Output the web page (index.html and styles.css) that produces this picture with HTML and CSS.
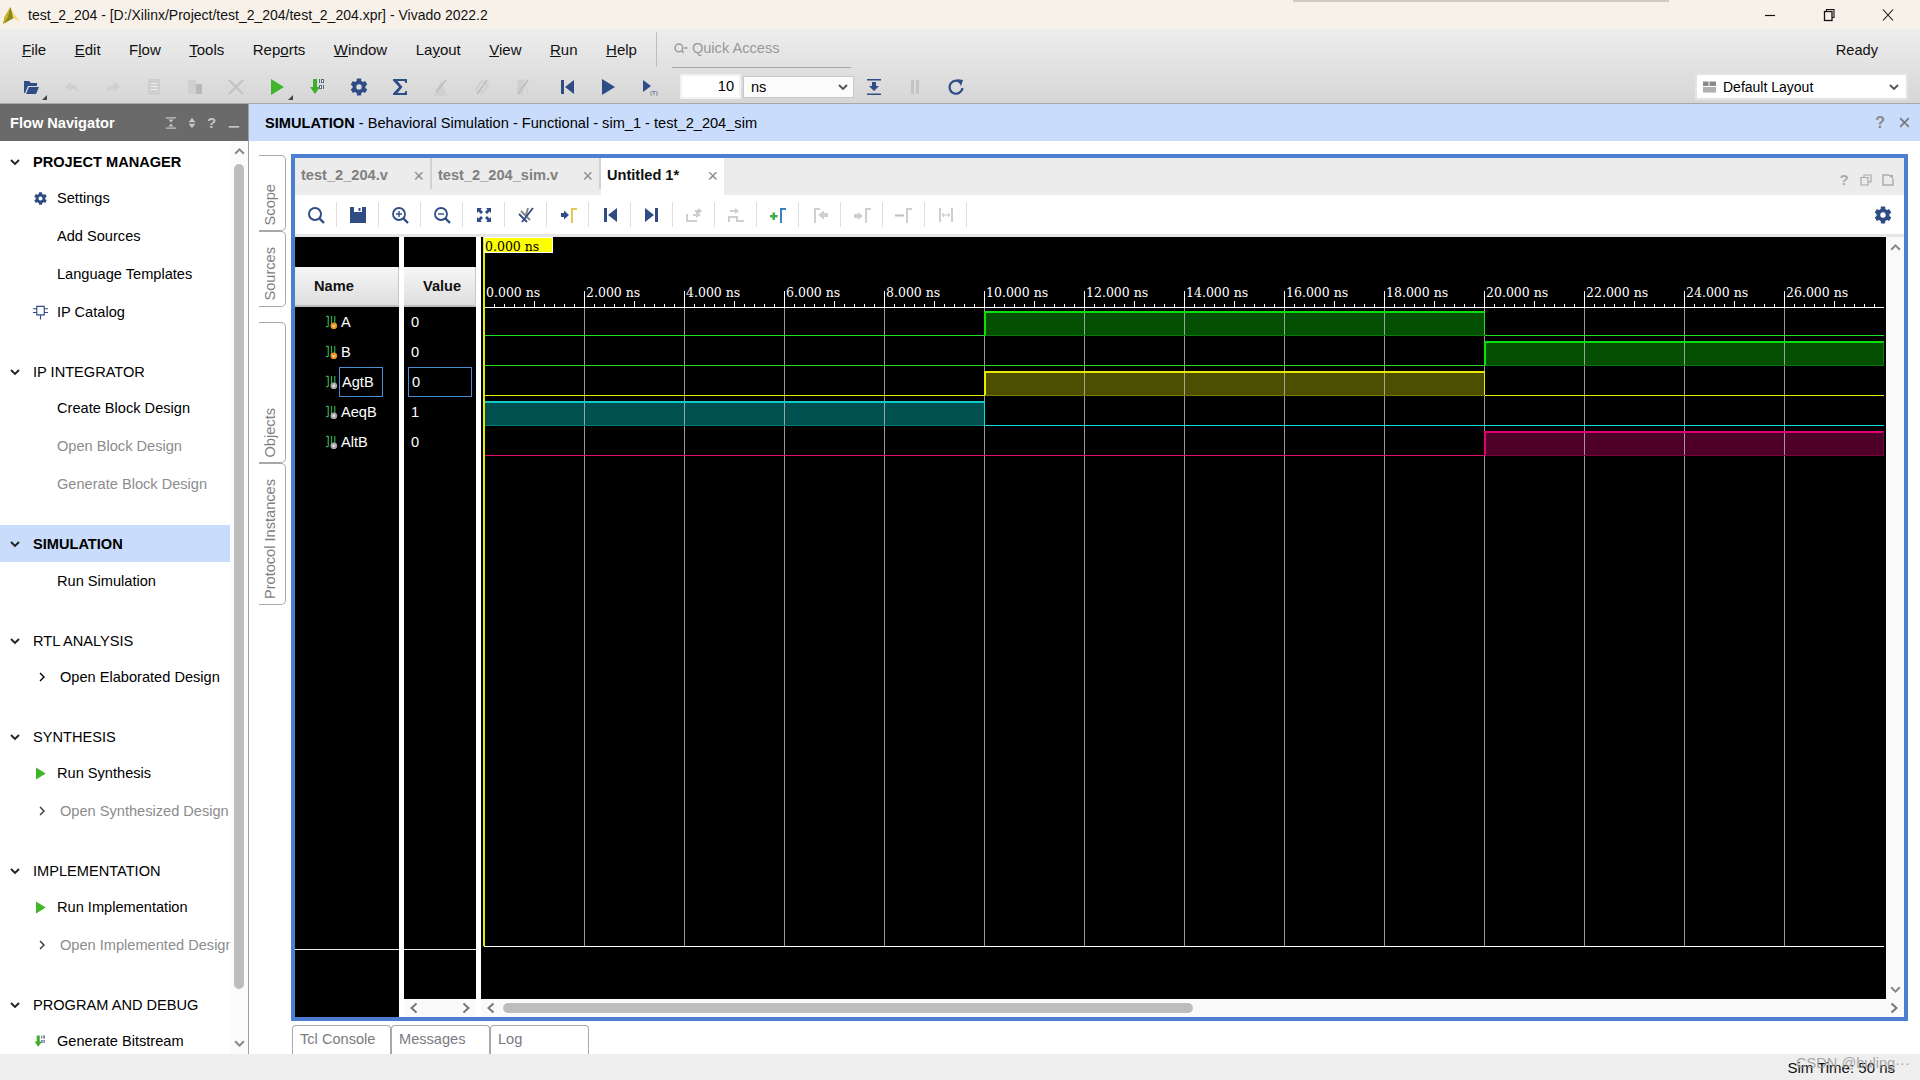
FILE: index.html
```html
<!DOCTYPE html>
<html lang="en">
<head>
<meta charset="utf-8">
<title>test_2_204 - Vivado 2022.2</title>
<link rel="stylesheet" href="styles.css">
</head>
<body>
<svg class="defs" width="0" height="0" aria-hidden="true">
  <defs>
    <symbol id="gear" viewBox="0 0 20 20">
      <circle cx="10" cy="10" r="4.6" fill="none" stroke="currentColor" stroke-width="3.8"/>
      <g fill="currentColor">
        <rect x="7.8" y="1.6" width="4.4" height="4" rx=".6"/>
        <rect x="7.8" y="14.4" width="4.4" height="4" rx=".6"/>
        <rect x="7.8" y="1.6" width="4.4" height="4" rx=".6" transform="rotate(60 10 10)"/>
        <rect x="7.8" y="1.6" width="4.4" height="4" rx=".6" transform="rotate(120 10 10)"/>
        <rect x="7.8" y="1.6" width="4.4" height="4" rx=".6" transform="rotate(240 10 10)"/>
        <rect x="7.8" y="1.6" width="4.4" height="4" rx=".6" transform="rotate(300 10 10)"/>
      </g>
    </symbol>
    <symbol id="play" viewBox="0 0 20 20"><path d="M4 2 L17 10 L4 18 Z" fill="currentColor"/></symbol>
    <symbol id="bits" viewBox="0 0 20 20">
      <path d="M5 2 H9 V10 H12 L7 17 L2 10 H5 Z" fill="#3fae2a"/>
      <path d="M11 2h1v4h-1zM13 2h3v4h-3zM11 8h3v4h-3zM15 8h1v4h-1z" fill="#5a6a88"/>
      <path d="M14 3h1v2h-1zM12 9h1v2h-1z" fill="#fff"/>
    </symbol>
    <symbol id="chev-down" viewBox="0 0 12 12"><path d="M2 4 L6 8 L10 4" fill="none" stroke="currentColor" stroke-width="1.9"/></symbol>
    <symbol id="chev-up" viewBox="0 0 12 12"><path d="M2 8 L6 4 L10 8" fill="none" stroke="currentColor" stroke-width="1.9"/></symbol>
    <symbol id="chev-right" viewBox="0 0 12 12"><path d="M4 2 L8 6 L4 10" fill="none" stroke="currentColor" stroke-width="1.4"/></symbol>
    <symbol id="chev-left-b" viewBox="0 0 12 12"><path d="M8.5 1.5 L3.5 6 L8.5 10.5" fill="none" stroke="currentColor" stroke-width="2"/></symbol>
    <symbol id="chev-right-b" viewBox="0 0 12 12"><path d="M3.5 1.5 L8.5 6 L3.5 10.5" fill="none" stroke="currentColor" stroke-width="2"/></symbol>
    <symbol id="sig-in" viewBox="0 0 14 16">
      <path d="M1 1.5h2.5v11M3.5 12.5H1M7 1v11.5h3M10.5 1v8" fill="none" stroke="#2fa84f" stroke-width="1.3"/>
      <circle cx="9.5" cy="11.5" r="3.6" fill="#e8901f"/><path d="M8 10.5l1.5 2.5 1.5-2.5" fill="none" stroke="#fff" stroke-width=".8"/>
    </symbol>
    <symbol id="sig-out" viewBox="0 0 14 16">
      <path d="M1 1.5h2.5v11M3.5 12.5H1M7 1v11.5h3M10.5 1v8" fill="none" stroke="#2fa84f" stroke-width="1.3"/>
      <circle cx="9.5" cy="11.5" r="3.6" fill="#a8a8a8"/><circle cx="9.5" cy="11.5" r="1.3" fill="#e8e8e8"/>
    </symbol>
  </defs>
</svg>

<div class="app">
  <header class="titlebar">
    <svg class="logo" viewBox="0 0 20 18"><path d="M9 0 L13 8 L19 15 L12 12 Z" fill="#f5d97a"/><path d="M9 0 L12 12 L3 17 L1 18 L3 10 Z" fill="#8a8a16"/><path d="M9 0 L6 11 L2 17 L1 18 L3 10Z" fill="#c8b428"/></svg>
    <span class="title-text">test_2_204 - [D:/Xilinx/Project/test_2_204/test_2_204.xpr] - Vivado 2022.2</span>
    <div class="win-controls">
      <svg viewBox="0 0 14 14"><path d="M2 7.5h10" stroke="#111" stroke-width="1.2"/></svg>
      <svg viewBox="0 0 14 14"><path d="M4.5 3.5V1.5h7.5v8h-2" fill="none" stroke="#111" stroke-width="1.1"/><rect x="2.5" y="3.5" width="7.5" height="9" fill="none" stroke="#111" stroke-width="1.3"/></svg>
      <svg viewBox="0 0 14 14"><path d="M2 1.5L12 12.5M12 1.5L2 12.5" stroke="#111" stroke-width="1.1"/></svg>
    </div>
    <div class="shadow-strip"></div>
  </header>

  <div class="chrome">
    <nav class="menubar">
      <span><u>F</u>ile</span><span><u>E</u>dit</span><span>F<u>l</u>ow</span><span><u>T</u>ools</span><span>Rep<u>o</u>rts</span><span><u>W</u>indow</span><span>La<u>y</u>out</span><span><u>V</u>iew</span><span><u>R</u>un</span><span><u>H</u>elp</span>
      <div class="menu-sep"></div>
      <div class="quick">
        <svg viewBox="0 0 14 14"><circle cx="5.5" cy="6.5" r="3.6" fill="none" stroke="#999" stroke-width="1.4"/><path d="M8 9l2 2M10.5 6.5h3" stroke="#999" stroke-width="1.3"/></svg>
        <span>Quick Access</span>
      </div>
      <span class="ready">Ready</span>
    </nav>

    <div class="toolbar">
      <button class="tb corner"><svg class="ic" viewBox="0 0 20 20"><path d="M3 4h5l2 2h6v3H7l-3 7H3z" fill="#2f4c85"/><path d="M8 10h10l-3 7H5z" fill="#2f4c85"/></svg></button>
      <button class="tb"><svg class="ic" viewBox="0 0 20 20"><path d="M9 5L3 10l6 5v-3c4 0 6 1 8 3-1-4-3-7-8-7z" fill="#cfcfcf"/></svg></button>
      <button class="tb"><svg class="ic" viewBox="0 0 20 20"><path d="M11 5l6 5-6 5v-3c-4 0-6 1-8 3 1-4 3-7 8-7z" fill="#cfcfcf"/></svg></button>
      <button class="tb"><svg class="ic" viewBox="0 0 20 20"><path d="M4 2h12v16H4z" fill="#cfcfcf"/><path d="M6.500 6h7v1h-7zM6.500 9h7v1h-7zM6.500 12h7v1h-7z" fill="#eee"/></svg></button>
      <button class="tb"><svg class="ic" viewBox="0 0 20 20"><path d="M3 3h8v14H3z" fill="#cfcfcf"/><path d="M11 7h6v10h-6z" fill="#b8b8b8"/></svg></button>
      <button class="tb"><svg class="ic" viewBox="0 0 20 20"><path d="M3 3L17 17M17 3L3 17" stroke="#c4c4c4" stroke-width="2.300"/></svg></button>
      <button class="tb corner"><svg class="ic green"><use href="#play"/></svg></button>
      <button class="tb"><svg class="ic"><use href="#bits"/></svg></button>
      <button class="tb"><svg class="ic blue"><use href="#gear"/></svg></button>
      <button class="tb"><svg class="ic" viewBox="0 0 20 20"><path d="M3 2h14v4h-1.500l-1-2H7.500l5 6-5 6h7l1-2H17v4H3v-1.500L9 10 3 3.500z" fill="#2f4c85"/></svg></button>
      <button class="tb"><svg class="ic" viewBox="0 0 20 20"><path d="M4 17L10 4l3 7 3 6z" fill="#cfcfcf"/><path d="M5 15L15 3" stroke="#bdbdbd" stroke-width="1.600"/><path d="M3 17h14v1.500H3z" fill="#cfcfcf"/></svg></button>
      <button class="tb"><svg class="ic" viewBox="0 0 20 20"><path d="M4 12l6-8 6 4-6 8z" fill="none" stroke="#cfcfcf" stroke-width="2"/><path d="M5 17L15 3" stroke="#bdbdbd" stroke-width="1.600"/></svg></button>
      <button class="tb gap-after"><svg class="ic" viewBox="0 0 20 20"><path d="M5 3h5v14H5zM11 3l4 14" fill="#cfcfcf" stroke="#cfcfcf"/><path d="M5 17L15 3" stroke="#bdbdbd" stroke-width="1.600"/></svg></button>
      <button class="tb"><svg class="ic" viewBox="0 0 20 20"><path d="M4 3h3v14H4zM17 3v14L8 10z" fill="#2f4c85"/></svg></button>
      <button class="tb"><svg class="ic blue"><use href="#play"/></svg></button>
      <button class="tb"><svg class="ic" viewBox="0 0 20 20"><path d="M4 3l8 6-8 6z" fill="#2f4c85"/><text x="11" y="18" class="tiny">(T)</text></svg></button>
      <div class="num-input">10</div>
      <div class="ns-select"><span>ns</span><svg class="chev"><use href="#chev-down"/></svg></div>
      <button class="tb tb-run"><svg class="ic" viewBox="0 0 20 20"><path d="M3 2h14v1.500H3zM3 16.500h14V18H3zM8 5h4v4h3l-5 5-5-5h3z" fill="#2f4c85"/></svg></button>
      <button class="tb tb-run"><svg class="ic" viewBox="0 0 20 20"><path d="M6 3h3v14H6zM11 3h3v14h-3z" fill="#c4c4c4"/></svg></button>
      <button class="tb tb-run"><svg class="ic" viewBox="0 0 20 20"><path d="M15 6a6.500 6.500 0 1 0 1.500 5" fill="none" stroke="#2f4c85" stroke-width="2.200"/><path d="M11 2l6 1-2 6z" fill="#2f4c85"/></svg></button>
      <div class="layout-select">
        <svg class="lay-ic" viewBox="0 0 14 12"><path d="M0 0h6v5H0zM7 0h7v5H7z" fill="#8a8a8a"/><path d="M0 6h14v6H0z" fill="#b0b0b0"/></svg>
        <span>Default Layout</span>
        <svg class="chev"><use href="#chev-down"/></svg>
      </div>
    </div>
  </div>

  <div class="main">
    <aside class="flow-nav">
      <div class="flow-head">
        <span class="flow-title">Flow Navigator</span>
        <svg class="fh-ic" viewBox="0 0 14 14"><path d="M1 1h12M1 13h12" stroke="#c4c4c4" stroke-width="1.400"/><path d="M4 3h6L7 6.500zM4 11h6L7 7.500z" fill="#c4c4c4"/></svg>
        <svg class="fh-ic" viewBox="0 0 14 14"><path d="M3 6h8L7 1zM3 8h8l-4 5z" fill="#c4c4c4"/></svg>
        <span class="fh-q">?</span>
        <svg class="fh-ic" viewBox="0 0 14 14"><path d="M1 11.500h12" stroke="#c4c4c4" stroke-width="2"/></svg>
      </div>
      <div class="flow-body">
        <div class="flow-list">
          <section class="group">
            <h3 class="gh strong"><svg class="gh-chev"><use href="#chev-down"/></svg>PROJECT MANAGER</h3>
            <div class="item"><svg class="slot blue"><use href="#gear"/></svg>Settings</div>
            <div class="item"><span class="slot"></span>Add Sources</div>
            <div class="item"><span class="slot"></span>Language Templates</div>
            <div class="item"><svg class="slot" viewBox="0 0 16 16"><path d="M4 1.500h8v9H4zM8 10.500v5M0 4h4M0 8h4M12 4h4M12 8h4" fill="none" stroke="#2f4c85" stroke-width="1.200"/></svg>IP Catalog</div>
          </section>
          <section class="group">
            <h3 class="gh"><svg class="gh-chev"><use href="#chev-down"/></svg>IP INTEGRATOR</h3>
            <div class="item"><span class="slot"></span>Create Block Design</div>
            <div class="item off"><span class="slot"></span>Open Block Design</div>
            <div class="item off"><span class="slot"></span>Generate Block Design</div>
          </section>
          <section class="group">
            <h3 class="gh strong active"><svg class="gh-chev"><use href="#chev-down"/></svg>SIMULATION</h3>
            <div class="item"><span class="slot"></span>Run Simulation</div>
          </section>
          <section class="group">
            <h3 class="gh"><svg class="gh-chev"><use href="#chev-down"/></svg>RTL ANALYSIS</h3>
            <div class="item sub"><svg class="slot"><use href="#chev-right"/></svg>Open Elaborated Design</div>
          </section>
          <section class="group">
            <h3 class="gh"><svg class="gh-chev"><use href="#chev-down"/></svg>SYNTHESIS</h3>
            <div class="item"><svg class="slot green"><use href="#play"/></svg>Run Synthesis</div>
            <div class="item sub off"><svg class="slot dark"><use href="#chev-right"/></svg>Open Synthesized Design</div>
          </section>
          <section class="group">
            <h3 class="gh"><svg class="gh-chev"><use href="#chev-down"/></svg>IMPLEMENTATION</h3>
            <div class="item"><svg class="slot green"><use href="#play"/></svg>Run Implementation</div>
            <div class="item sub off"><svg class="slot dark"><use href="#chev-right"/></svg>Open Implemented Design</div>
          </section>
          <section class="group">
            <h3 class="gh"><svg class="gh-chev"><use href="#chev-down"/></svg>PROGRAM AND DEBUG</h3>
            <div class="item"><svg class="slot"><use href="#bits"/></svg>Generate Bitstream</div>
          </section>
        </div>
        <div class="vscroll">
          <svg class="sb-chev"><use href="#chev-up"/></svg>
          <div class="vthumb"></div>
          <svg class="sb-chev"><use href="#chev-down"/></svg>
        </div>
      </div>
    </aside>

    <section class="content">
      <div class="sim-head">
        <span><b>SIMULATION</b> - Behavioral Simulation - Functional - sim_1 - test_2_204_sim</span>
        <span class="sim-q">?</span>
        <svg class="sim-x" viewBox="0 0 12 12"><path d="M2 2l8 8M10 2l-8 8" stroke="#777" stroke-width="1.500"/></svg>
      </div>
      <div class="workspace">
        <div class="vtabs">
          <div class="vtab t-scope"><span>Scope</span></div>
          <div class="vtab t-sources"><span>Sources</span></div>
          <div class="vtab t-objects"><span>Objects</span></div>
          <div class="vtab t-proto"><span>Protocol Instances</span></div>
        </div>
        <div class="center">
          <div class="panel">
            <div class="tabs">
              <div class="tab t1"><span>test_2_204.v</span><i class="x">×</i></div>
              <div class="tab t2"><span>test_2_204_sim.v</span><i class="x">×</i></div>
              <div class="tab t3 on"><span>Untitled 1*</span><i class="x">×</i></div>
              <div class="tab-tools">
                <span class="tq">?</span>
                <svg viewBox="0 0 12 12"><path d="M4 3V1h7v7H8.500M1 3.500h7v7.500H1z" fill="none" stroke="#aaa" stroke-width="1.200"/></svg>
                <svg viewBox="0 0 12 12"><path d="M7 1H1v10h10V5" fill="none" stroke="#aaa" stroke-width="1.400"/><path d="M6 1h5v4z" fill="#aaa"/></svg>
              </div>
            </div>
            <div class="ptools">
              <div class="pb"><svg class="ic" viewBox="0 0 20 20"><circle cx="9" cy="9" r="6" fill="none" stroke="#2f4c85" stroke-width="2"/><path d="M13 13l5 5" stroke="#2f4c85" stroke-width="2.400"/></svg></div>
              <div class="pb"><svg class="ic" viewBox="0 0 20 20"><path d="M2 2h16v16H2z" fill="#2f4c85"/><path d="M6 2h8v5H6z" fill="#fff"/><path d="M10.500 3h2v3h-2z" fill="#2f4c85"/></svg></div>
              <div class="pb"><svg class="ic" viewBox="0 0 20 20"><circle cx="9" cy="9" r="6" fill="none" stroke="#2f4c85" stroke-width="1.800"/><path d="M13 13l5 5" stroke="#2f4c85" stroke-width="2.400"/><path d="M6 9h6M9 6v6" stroke="#2f4c85" stroke-width="1.400"/></svg></div>
              <div class="pb"><svg class="ic" viewBox="0 0 20 20"><circle cx="9" cy="9" r="6" fill="none" stroke="#2f4c85" stroke-width="1.800"/><path d="M13 13l5 5" stroke="#2f4c85" stroke-width="2.400"/><path d="M6 9h6" stroke="#2f4c85" stroke-width="1.400"/></svg></div>
              <div class="pb"><svg class="ic" viewBox="0 0 20 20"><path d="M3 3h5L6.500 4.500 9 7 7 9 4.500 6.500 3 8zM17 3v5l-1.500-1.500L13 9l-2-2 2.500-2.500L12 3zM3 17v-5l1.500 1.500L7 11l2 2-2.500 2.500L8 17zM17 17h-5l1.500-1.500L11 13l2-2 2.500 2.500L17 12z" fill="#2f4c85"/></svg></div>
              <div class="pb"><svg class="ic" viewBox="0 0 20 20"><path d="M5 6l9 9M12 3l-2 7" stroke="#888" stroke-width="2"/><path d="M3 9l8 8M17 3L6 17" stroke="#2f4c85" stroke-width="1.800"/></svg></div>
              <div class="pb"><svg class="ic" viewBox="0 0 20 20"><path d="M3 8h3V5.500L11 10l-5 4.500V12H3z" fill="#2f4c85"/><path d="M13 3h6v2h-4v13h-2z" fill="#e6c65a"/></svg></div>
              <div class="pb"><svg class="ic" viewBox="0 0 20 20"><path d="M4 3h3v14H4zM17 3v14L8 10z" fill="#2f4c85"/></svg></div>
              <div class="pb"><svg class="ic" viewBox="0 0 20 20"><path d="M13 3h3v14h-3zM3 3v14l9-7z" fill="#2f4c85"/></svg></div>
              <div class="pb"><svg class="ic" viewBox="0 0 20 20"><path d="M2 17V9h2v6h9v2zM9 9h3V6l5 4-5 3v-2H9z" fill="#cfcfcf"/><path d="M11 5h3V3l4 3-4 3V7h-3z" fill="#c8c8c8"/></svg></div>
              <div class="pb"><svg class="ic" viewBox="0 0 20 20"><path d="M18 17h-8v-6h2v4h6zM4 5h5V3l4 3-4 3V7H4zM2 11h8v2H4v4H2z" fill="#cfcfcf"/></svg></div>
              <div class="pb"><svg class="ic" viewBox="0 0 20 20"><path d="M2 10h2.500V7.500H7V10h2.500v2.500H7V15H4.500v-2.500H2z" fill="#3fae4a"/><path d="M12 3h6v2h-4v13h-2z" fill="#3d7fbf"/></svg></div>
              <div class="pb"><svg class="ic" viewBox="0 0 20 20"><path d="M4 3h6v2H6v13H4z" fill="#cfcfcf"/><path d="M18 8h-4V5.500L8 10l6 4.500V12h4z" fill="#cfcfcf"/></svg></div>
              <div class="pb"><svg class="ic" viewBox="0 0 20 20"><path d="M2 9h4V7l5 4-5 4v-2H2z" fill="#cfcfcf"/><path d="M13 3h6v2h-4v13h-2z" fill="#cfcfcf"/></svg></div>
              <div class="pb"><svg class="ic" viewBox="0 0 20 20"><path d="M1 9.500h9v2H1z" fill="#bdbdbd"/><path d="M12 3h6v2h-4v13h-2z" fill="#cfcfcf"/></svg></div>
              <div class="pb"><svg class="ic" viewBox="0 0 20 20"><path d="M3 3h2v14H3zM15 3h2v14h-2z" fill="#cfcfcf"/><path d="M6 10h8M6 10l2-2M6 10l2 2M14 10l-2-2M14 10l-2 2" stroke="#c4c4c4" fill="none"/></svg></div>
              <svg class="ic blue pgear"><use href="#gear"/></svg>
            </div>
            <div class="work">
              <div class="col-name">
                <div class="col-top"></div>
                <div class="col-head name-head">Name</div>
                <div class="rows">
                  <div class="row"><svg class="sig"><use href="#sig-in"/></svg><span>A</span></div>
                  <div class="row"><svg class="sig"><use href="#sig-in"/></svg><span>B</span></div>
                  <div class="row"><svg class="sig"><use href="#sig-out"/></svg><span class="sel">AgtB</span></div>
                  <div class="row"><svg class="sig"><use href="#sig-out"/></svg><span>AeqB</span></div>
                  <div class="row"><svg class="sig"><use href="#sig-out"/></svg><span>AltB</span></div>
                </div>
              </div>
              <div class="col-value">
                <div class="val-body">
                  <div class="col-top"></div>
                  <div class="col-head value-head">Value</div>
                  <div class="rows">
                    <div class="vrow">0</div>
                    <div class="vrow">0</div>
                    <div class="vrow sel-val">0</div>
                    <div class="vrow">1</div>
                    <div class="vrow">0</div>
                  </div>
                </div>
                <div class="hbar between">
                  <svg class="hb-chev"><use href="#chev-left-b"/></svg>
                  <svg class="hb-chev"><use href="#chev-right-b"/></svg>
                </div>
              </div>
              <div class="col-wave">
                <div class="wave-top">
                  <svg class="wave" viewBox="0 0 1405 762" width="1405" height="762">
                    <g class="fills">
                      <rect class="f-green" x="503.5" y="75" width="500" height="23.500"/>
                      <rect class="f-green" x="1003.5" y="105" width="399" height="23.500"/>
                      <rect class="f-yellow" x="503.5" y="135" width="500" height="23.500"/>
                      <rect class="f-cyan" x="3.5" y="165" width="500" height="23.500"/>
                      <rect class="f-pink" x="1003.5" y="195" width="399" height="23.500"/>
                    </g>
                    <g class="grid">
                      <path d="M3.500 70V709M103.500 70V709M203.500 70V709M303.500 70V709M403.500 70V709M503.500 70V709M603.500 70V709M703.500 70V709M803.500 70V709M903.500 70V709M1003.500 70V709M1103.500 70V709M1203.500 70V709M1303.500 70V709"/>
                    </g>
                    <g class="axis">
                      <path d="M3 70.500H1403"/>
                      <path class="dash10" d="M3 68.500H1403"/>
                      <path class="dash50" d="M53 67H1403"/>
                      <path d="M3.500 54V70M103.500 54V70M203.500 54V70M303.500 54V70M403.500 54V70M503.500 54V70M603.500 54V70M703.500 54V70M803.500 54V70M903.500 54V70M1003.500 54V70M1103.500 54V70M1203.500 54V70M1303.500 54V70"/>
                      <path d="M3 709.500H1403"/>
                    </g>
                    <g class="sig-green">
                      <path class="edge" d="M503.500 98.500V75M503.500 75H1003.500"/>
                      <path d="M3 98.500H503.500M1003.500 75V98.500H1403"/>
                      <path class="dim" d="M503.500 98.500H1003.500"/>
                      <path class="edge" d="M1003.500 128.500V105H1403"/>
                      <path d="M3 128.500H1003.500"/>
                      <path class="dim" d="M1003.500 128.500H1402.500V105"/>
                    </g>
                    <g class="sig-yellow">
                      <path class="edge" d="M503.500 158.500V135H1003.500"/>
                      <path d="M3 158.500H503.500M1003.500 135V158.500H1403"/>
                      <path class="dim" d="M503.500 158.500H1003.500"/>
                    </g>
                    <g class="sig-cyan">
                      <path class="edge" d="M3.500 165H503.500"/>
                      <path class="dim" d="M3.500 165V188.500H503.500"/>
                      <path d="M503.500 165V188.500H1403"/>
                    </g>
                    <g class="sig-pink">
                      <path class="edge" d="M1003.500 218.500V195H1403"/>
                      <path d="M3 218.500H1003.500"/>
                      <path class="dim" d="M1003.500 218.500H1402.500V195"/>
                    </g>
                    <g class="labels">
                      <text x="5" y="60">0.000 ns</text><text x="105" y="60">2.000 ns</text><text x="205" y="60">4.000 ns</text><text x="305" y="60">6.000 ns</text><text x="405" y="60">8.000 ns</text><text x="505" y="60">10.000 ns</text><text x="605" y="60">12.000 ns</text><text x="705" y="60">14.000 ns</text><text x="805" y="60">16.000 ns</text><text x="905" y="60">18.000 ns</text><text x="1005" y="60">20.000 ns</text><text x="1105" y="60">22.000 ns</text><text x="1205" y="60">24.000 ns</text><text x="1305" y="60">26.000 ns</text>
                    </g>
                    <rect class="cursor" x="2" y="0" width="2" height="709"/>
                    <rect class="cursor-tag" x="3.500" y="0.500" width="68" height="15"/>
                    <text class="cursor-label" x="4" y="14">0.000 ns</text>
                  </svg>
                  <div class="right-bar">
                    <svg class="sb-chev"><use href="#chev-up"/></svg>
                    <svg class="sb-chev"><use href="#chev-down"/></svg>
                  </div>
                </div>
                <div class="hbar">
                  <svg class="hb-chev"><use href="#chev-left-b"/></svg>
                  <div class="hthumb"></div>
                  <svg class="hb-chev end"><use href="#chev-right-b"/></svg>
                </div>
              </div>
            </div>
          </div>
          <div class="bottom-tabs">
            <div class="btab">Tcl Console</div>
            <div class="btab">Messages</div>
            <div class="btab">Log</div>
          </div>
        </div>
      </div>
    </section>
  </div>

  <footer class="statusbar">
    <span>Sim Time: 50 ns</span>
    <span class="watermark">CSDN @buling···</span>
  </footer>
</div>
</body>
</html>
```

FILE: styles.css
```css
* { box-sizing: border-box; }
html, body { margin: 0; padding: 0; height: 100%; overflow: hidden; }
body { font-family: "Liberation Sans", Arial, sans-serif; font-size: 14.6px; color: #000; background: #fff; }
.defs { position: absolute; }
button { border: 0; background: none; padding: 0; margin: 0; font: inherit; }
.app { width: 1920px; height: 1080px; display: flex; flex-direction: column; }

.titlebar { height: 29px; flex: none; display: flex; align-items: center; background: #f8f1e9; position: relative; padding-left: 2px; }
.logo { width: 19px; height: 17px; margin-right: 0; margin-top: 1px; flex: none; }
.title-text { margin-left: 7px; font-size: 14px; color: #111; white-space: nowrap; }
.win-controls { margin-left: auto; display: flex; align-items: center; gap: 45px; padding-right: 25px; }
.win-controls svg { width: 14px; height: 14px; display: block; }
.shadow-strip { position: absolute; left: 1293px; top: 0; width: 376px; height: 2px; background: #cfcac4; }

.chrome { flex: none; height: 75px; background: linear-gradient(#ededed, #d6d6d6); border-bottom: 1px solid #a8a8a8; display: flex; flex-direction: column; }
.menubar { height: 41px; flex: none; display: flex; align-items: center; gap: 28.5px; padding-left: 22px; font-size: 15px; color: #111; }
.menu-sep { width: 1px; height: 35px; background: #bdbdbd; margin-left: -9px; margin-right: -14px; flex: none; }
.quick { width: 179px; height: 35px; border-bottom: 1px solid #a8a8a8; display: flex; align-items: center; gap: 3px; color: #999; font-size: 14.6px; margin-bottom: -1px; padding-bottom: 3px; margin-top: 0; flex: none; }
.quick svg { width: 17px; height: 15px; flex: none; }
.ready { margin-left: auto; margin-right: 42px; font-size: 14.6px; }

.toolbar { flex: 1; display: flex; align-items: center; padding-left: 10px; }
.tb { width: 41px; height: 28px; display: flex; align-items: center; justify-content: center; flex: none; position: relative; }
.tb.corner::after { content: ""; position: absolute; right: 4px; bottom: 1px; border-style: solid; border-width: 0 0 5px 5px; border-color: transparent transparent #444 transparent; }
.tb.gap-after { margin-right: 3px; }
.tb-run { margin: 0; }
.ic { width: 20px; height: 20px; display: block; flex: none; }
.blue { color: #2f4c85; }
.green { color: #3fb52a; }
.dark { color: #333; }
.tiny { font-size: 6px; fill: #2f4c85; font-family: "Liberation Sans", sans-serif; }
.num-input { width: 61px; height: 25px; margin-left: 11px; background: #fff; border: 2px solid #f2f2f2; text-align: right; padding-right: 5px; font-size: 14.6px; line-height: 21px; flex: none; }
.ns-select { width: 111px; height: 22px; margin-left: 2px; background: #fbfbfb; border: 1px solid #c8c8c8; display: flex; align-items: center; justify-content: space-between; padding: 0 4px 0 7px; font-size: 14.6px; flex: none; }
.chev { width: 12px; height: 12px; color: #555; flex: none; }
.layout-select { margin-left: auto; margin-right: 12px; width: 213px; height: 27px; background: #fff; border: 2px solid #e4e4e4; display: flex; align-items: center; padding: 0 6px 0 6px; font-size: 14px; flex: none; }
.lay-ic { width: 13px; height: 12px; margin-right: 7px; flex: none; }
.layout-select .chev { margin-left: auto; }
.ns-select + .tb-run { margin-left: -1px; }

.main { flex: 1; min-height: 0; display: flex; }

.flow-nav { width: 249px; flex: none; display: flex; flex-direction: column; border-right: 1px solid #a0a0a0; }
.flow-head { height: 37px; flex: none; background: #6a6a6a; display: flex; align-items: center; padding-left: 10px; color: #fff; }
.flow-title { font-weight: bold; font-size: 14.6px; width: 155px; flex: none; }
.fh-ic { width: 12px; height: 12px; flex: none; margin-right: 9px; }
.fh-q { color: #c4c4c4; font-weight: bold; font-size: 15px; width: 9px; margin-right: 12px; flex: none; }
.flow-body { flex: 1; min-height: 0; display: flex; }
.flow-list { width: 230px; flex: none; overflow: hidden; padding-top: 4px; }
.group { margin-bottom: 24px; }
.gh { margin: 0; height: 34px; display: flex; align-items: center; font-size: 14.6px; font-weight: normal; padding-left: 9px; white-space: nowrap; }
.gh.strong { font-weight: bold; }
.gh.active { background: #c9dcfb; height: 37px; margin-top: -2px; }
.gh-chev { width: 12px; height: 12px; margin-right: 12px; flex: none; color: #222; }
.item { height: 38px; display: flex; align-items: center; padding-left: 33px; white-space: nowrap; }
.item.off { color: #8c8c8c; }
.item.sub { padding-left: 36px; }
.slot { width: 15px; height: 15px; margin-right: 9px; flex: none; display: block; }
.sub .slot { width: 12px; height: 12px; margin-right: 12px; }
.vscroll { flex: 1; background: #fbfbfb; display: flex; flex-direction: column; align-items: center; padding: 4px 0; }
.sb-chev { width: 13px; height: 13px; color: #888; flex: none; }
.vthumb { width: 10px; flex: 1; margin: 6px 0 48px; background: #bdbdbd; border-radius: 5px; }

.content { flex: 1; min-width: 0; display: flex; flex-direction: column; }
.sim-head { height: 37px; flex: none; background: #c9dcfb; display: flex; align-items: center; padding-left: 16px; font-size: 14.6px; }
.sim-q { margin-left: auto; color: #888; font-weight: bold; font-size: 16px; margin-right: 13px; }
.sim-x { width: 13px; height: 13px; margin-right: 9px; flex: none; }
.workspace { flex: 1; min-height: 0; display: flex; padding: 13px 12px 0 10px; }

.vtabs { width: 27px; flex: none; margin-right: 5px; padding-top: 1px; display: flex; flex-direction: column; }
.vtab { border: 1px solid #a8a8a8; border-left: 0; border-radius: 0 5px 5px 0; display: flex; justify-content: center; align-items: flex-end; padding: 0 5px 5px 0; flex: none; color: #808080; font-size: 14.6px; }
.vtab span { writing-mode: vertical-rl; transform: rotate(180deg); white-space: nowrap; line-height: 18px; }
.t-scope { height: 76px; }
.t-sources { height: 76px; margin-bottom: 15px; }
.t-objects { height: 141px; }
.t-proto { height: 142px; }

.center { flex: 1; min-width: 0; display: flex; flex-direction: column; }
.panel { height: 867px; flex: none; border: 4px solid #4c7fd2; display: flex; flex-direction: column; background: #fff; }
.tabs { height: 37px; flex: none; background: #ececec; display: flex; }
.tab { display: flex; align-items: flex-start; padding: 9px 0 0 6px; font-weight: bold; font-size: 14.6px; color: #808080; flex: none; height: 31px; border-right: 2px solid #d2d2d2; }
.tab.t1 { width: 137px; }
.tab.t2 { width: 169px; }
.tab.t3 { width: 123px; height: 37px; background: #fff; color: #111; border: 0; }
.x { margin-left: auto; font-style: normal; font-weight: normal; font-size: 18px; line-height: 18px; color: #888; padding-right: 6px; }
.tab.t3 .x { padding-right: 6px; }
.tab-tools { margin-left: auto; display: flex; align-items: center; gap: 10px; padding: 6px 10px 0 0; height: 37px; }
.tab-tools svg { width: 12px; height: 12px; flex: none; }
.tq { color: #aaa; font-weight: bold; font-size: 15px; width: 12px; text-align: center; }

.ptools { height: 42px; flex: none; background: #fff; border-bottom: 3px solid #e6e6e6; display: flex; align-items: center; }
.pb { width: 42px; height: 25px; border-right: 1px solid #dedede; display: flex; align-items: center; justify-content: center; flex: none; }
.pgear { margin-left: auto; margin-right: 11px; }

.work { flex: 1; min-height: 0; display: flex; background: #fff; }
.col-name { width: 104px; flex: none; background: #000; display: flex; flex-direction: column; margin-right: 5px; }
.col-value { width: 72px; flex: none; display: flex; flex-direction: column; margin-right: 5px; }
.val-body { flex: 1; min-height: 0; background: #000; display: flex; flex-direction: column; }
.col-top { height: 30px; flex: none; }
.col-head { height: 40px; flex: none; background: linear-gradient(#f6f6f6, #dedede); border-bottom: 2px solid #bdbdbd; border-right: 1px solid #c8c8c8; display: flex; align-items: center; font-weight: bold; color: #111; font-size: 14.6px; }
.name-head { padding-left: 19px; }
.value-head { padding-left: 19px; }
.rows { height: 643px; flex: none; border-bottom: 1px solid #e8e8e8; color: #fff; }
.row { height: 30px; display: flex; align-items: center; padding-left: 30px; }
.sig { width: 13px; height: 15px; margin-right: 3px; flex: none; }
.row span { padding: 0 0 0 0; }
.row .sel { height: 30px; width: 44px; margin-left: -2px; padding-left: 2px; border: 1px solid #4a90d0; display: flex; align-items: center; }
.vrow { height: 30px; display: flex; align-items: center; padding-left: 7px; }
.vrow.sel-val { margin: 0 4px; padding-left: 3px; border: 1px solid #4a90d0; }
.hbar { height: 18px; flex: none; background: #fafafa; display: flex; align-items: center; padding: 0 4px; color: #777; }
.hbar.between { justify-content: space-between; }
.hb-chev { width: 12px; height: 12px; flex: none; }
.hb-chev.end { margin-left: auto; }
.hthumb { width: 690px; height: 10px; margin-left: 6px; background: #bdbdbd; border-radius: 5px; flex: none; }

.col-wave { flex: 1; min-width: 0; display: flex; flex-direction: column; }
.wave-top { flex: 1; min-height: 0; display: flex; }
.wave { display: block; width: 1405px; height: 762px; background: #000; flex: none; shape-rendering: crispEdges; }
.right-bar { flex: 1; background: #fafafa; display: flex; flex-direction: column; justify-content: space-between; align-items: center; padding: 4px 0 3px; }

.f-green { fill: #035003; }
.f-yellow { fill: #4e4e00; }
.f-cyan { fill: #015050; }
.f-pink { fill: #4e0028; }
.grid path { stroke: #bcbcbc; stroke-width: 1; fill: none; opacity: .8; }
.axis path { stroke: #fff; stroke-width: 1; fill: none; }
.axis .dash10 { stroke-width: 4; stroke-dasharray: 1 9; }
.axis .dash50 { stroke-width: 7; stroke-dasharray: 1 99; }
.sig-green path, .sig-yellow path, .sig-cyan path, .sig-pink path { fill: none; stroke-width: 1; }
.sig-green path { stroke: #22e022; }
.sig-green .edge { stroke: #0ae00a; stroke-width: 2; }
.sig-green .dim { stroke: #0a780a; }
.sig-yellow path { stroke: #e8e800; }
.sig-yellow .edge { stroke-width: 2; }
.sig-yellow .dim { stroke: #7a7a00; }
.sig-cyan path { stroke: #10dcdc; }
.sig-cyan .edge { stroke: #10c8c8; stroke-width: 2; }
.sig-cyan .dim { stroke: #007a7a; }
.sig-pink path { stroke: #e0106e; }
.sig-pink .edge { stroke: #e0006e; stroke-width: 2; }
.sig-pink .dim { stroke: #7a0040; }
.labels text { fill: #fff; font-family: "DejaVu Serif", serif; font-size: 12.5px; shape-rendering: auto; }
.cursor { fill: #e8e800; }
.cursor-tag { fill: #ffff00; stroke: #fff; stroke-width: 1; }
.cursor-label { fill: #000; font-family: "DejaVu Serif", serif; font-size: 12.5px; }

.bottom-tabs { display: flex; margin-top: 4px; height: 29px; flex: none; padding-left: 1px; }
.btab { width: 99px; height: 29px; border: 1px solid #a8a8a8; border-bottom: 0; border-radius: 4px 4px 0 0; padding: 5px 0 0 7px; color: #7a7a80; font-size: 14.6px; flex: none; margin-right: 0; }

.statusbar { height: 26px; flex: none; background: #eeeeee; position: relative; display: flex; align-items: center; justify-content: flex-end; padding: 1px 25px 0 0; font-size: 15px; color: #111; }
.watermark { position: absolute; left: 1796px; top: 0; color: #9a9a9a; font-size: 14.6px; opacity: .85; white-space: nowrap; line-height: 18px; }
```
